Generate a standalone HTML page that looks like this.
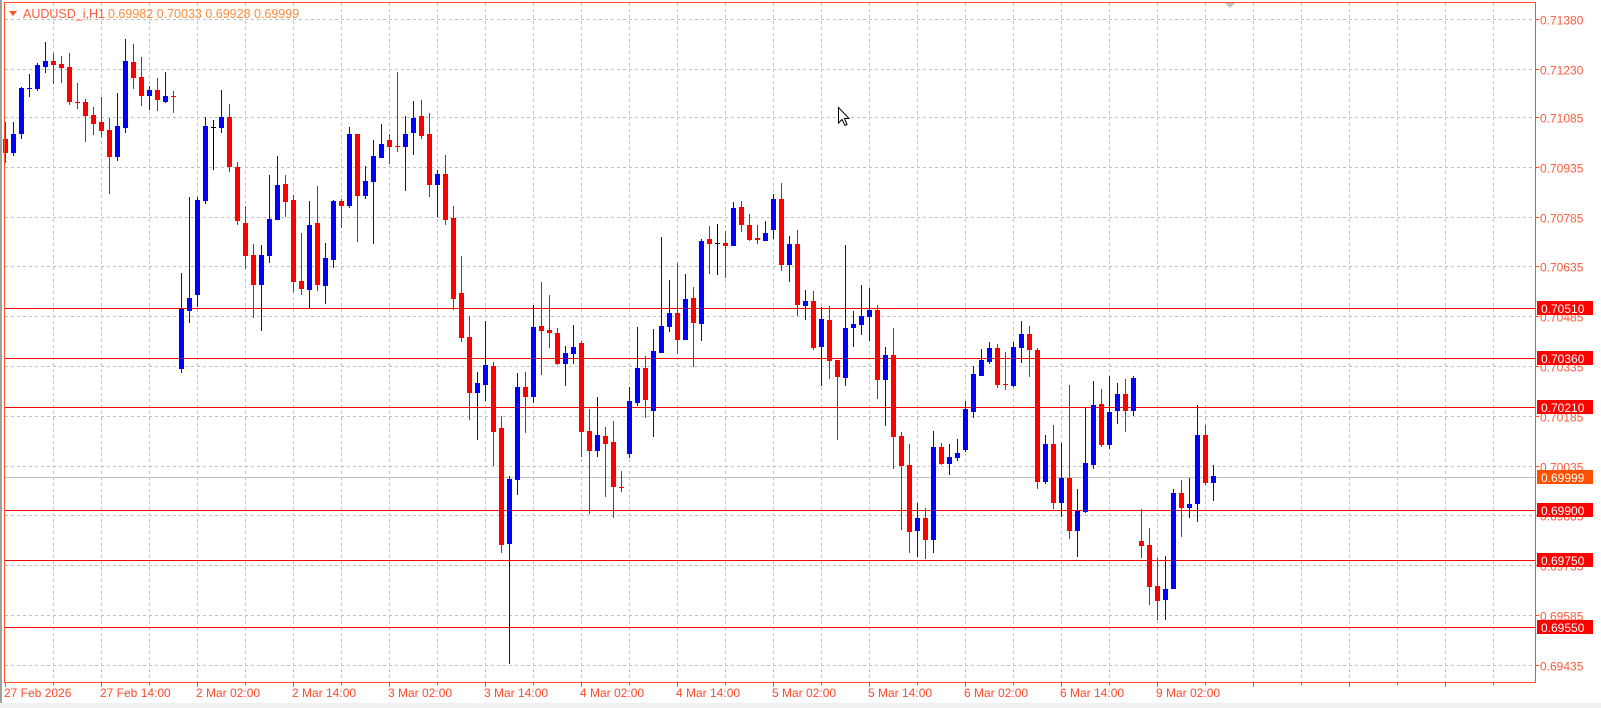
<!DOCTYPE html>
<html><head><meta charset="utf-8">
<style>
html,body{margin:0;padding:0;background:#fff;}
body{width:1601px;height:708px;overflow:hidden;}
svg{display:block;}
text{font-family:"Liberation Sans",sans-serif;}
</style></head>
<body>
<svg id="s" width="1601" height="708" viewBox="0 0 1601 708" xmlns="http://www.w3.org/2000/svg">
<rect x="0" y="0" width="1601" height="708" fill="#fff"/>
<rect x="0" y="0" width="2" height="708" fill="#a0a0a0"/>
<rect x="0" y="703" width="1601" height="5" fill="#f0f0f0"/>
<g id="grid" stroke="#c0c0c0" stroke-width="1" stroke-dasharray="3,3"></g>
<g id="lines"></g>
<g id="candles"></g>
<rect x="4.5" y="2.5" width="1531" height="680" fill="none" stroke="#ff5020" stroke-width="1"/>
<polygon points="1225,3 1235,3 1230,8" fill="#c0c0c0"/>
<polygon points="9,11 17,11 13,16" fill="#ff5020"/>
<text x="23" y="18" font-size="12.5" fill="#ff5a3c">AUDUSD_i,H1</text>
<text x="108" y="18" font-size="12.5" fill="#ff8c3a">0.69982 0.70033 0.69928 0.69999</text>
<g id="plabels" font-size="12" fill="#ff5a3c"></g>
<g id="boxes" font-size="12"></g>
<g id="tlabels" font-size="12" fill="#ff4a2a"></g>
<path d="M838.5,107.5 L838.5,123 L842,119.5 L845,125.5 L847,124.5 L844.5,118.5 L849,118.5 Z" fill="#fff" stroke="#000" stroke-width="1"/>
</svg>
<script>
var NS="http://www.w3.org/2000/svg";
function el(p,t,a,txt){var e=document.createElementNS(NS,t);for(var k in a)e.setAttribute(k,a[k]);if(txt!=null)e.textContent=txt;document.getElementById(p).appendChild(e);return e;}
for(var k=1;k<=31;k++){var x=5.5+48*k;el("grid","line",{x1:x,y1:3,x2:x,y2:682});}
var plab=["0.71380","0.71230","0.71085","0.70935","0.70785","0.70635","0.70485","0.70335","0.70185","0.70035","0.69885","0.69735","0.69585","0.69435"];
function py(p){return 19+(0.71380-p)*33200;}
for(var i=0;i<plab.length;i++){var y=Math.round(py(parseFloat(plab[i])))+0.5;
 if(y<682)el("grid","line",{x1:5,y1:y,x2:1535,y2:y});
 el("lines","line",{x1:1535,y1:y,x2:1539,y2:y,stroke:"#ff5020"});
 el("plabels","text",{x:1540,y:y+5},plab[i]);}
var gy=Math.round(py(0.69999))+0.5;
el("lines","line",{x1:5,y1:gy,x2:1535,y2:gy,stroke:"#c0c0c0"});
var reds=["0.70510","0.70360","0.70210","0.69900","0.69750","0.69550"];
for(var i=0;i<reds.length;i++){var y=Math.round(py(parseFloat(reds[i])))+0.5;
 el("lines","line",{x1:5,y1:y,x2:1535,y2:y,stroke:"#ff0000"});
 el("boxes","rect",{x:1537,y:y-7.5,width:56,height:14,fill:"#ff0000"});
 el("boxes","text",{x:1541,y:y+4.5,fill:"#fff"},reds[i]);}
el("boxes","rect",{x:1537,y:gy-7.5,width:56,height:14,fill:"#ff5000"});
el("boxes","text",{x:1541,y:gy+4.5,fill:"#fff"},"0.69999");
var tl=["27 Feb 2026","27 Feb 14:00","2 Mar 02:00","2 Mar 14:00","3 Mar 02:00","3 Mar 14:00","4 Mar 02:00","4 Mar 14:00","5 Mar 02:00","5 Mar 14:00","6 Mar 02:00","6 Mar 14:00","9 Mar 02:00"];
for(var k=0;k<=31;k++){var x=5.5+48*k;el("lines","line",{x1:x,y1:682,x2:x,y2:(k%2==0?687:685),stroke:"#ff5020"});}
for(var i=0;i<tl.length;i++){el("tlabels","text",{x:4+96*i,y:697},tl[i]);}
var D=[
[0,'r',139,153,122,163],[1,'b',134,153,122,156],[2,'b',88,134,87,139],[3,'b',88,88,74,97],[4,'b',65,89,63,91],
[5,'b',61,67,42,73],[6,'r',61,65,53,84],[7,'r',64,68,56,83],[8,'r',67,102,53,105],[9,'r',102,102,83,109],
[10,'r',102,116,99,142],[11,'r',115,124,107,135],[12,'r',122,131,97,137],[13,'r',130,157,118,194],[14,'b',126,157,93,161],
[15,'b',61,128,39,133],[16,'r',62,78,44,89],[17,'r',77,96,57,106],[18,'b',90,96,86,110],[19,'r',90,100,78,111],
[20,'b',96,102,72,103],[21,'r',96,96,91,113],[22,'b',309,369,273,373],[23,'b',298,311,197,323],[24,'b',200,295,197,307],
[25,'b',126,201,117,204],[26,'k',127,127,120,170],[27,'b',117,128,90,133],[28,'r',117,167,104,172],[29,'r',167,221,162,225],
[30,'r',223,256,206,269],[31,'r',255,285,244,318],[32,'b',255,285,245,331],[33,'b',219,256,175,263],[34,'b',185,220,156,220],
[35,'r',184,202,175,217],[36,'r',200,282,195,292],[37,'r',281,289,233,295],[38,'b',225,290,201,308],[39,'r',223,285,186,291],
[40,'b',258,286,243,304],[41,'b',201,260,200,268],[42,'r',201,206,199,228],[43,'b',134,206,127,208],[44,'r',134,196,134,242],
[45,'b',181,196,166,199],[46,'b',156,182,140,244],[47,'b',144,158,124,158],[48,'r',140,147,134,164],[49,'r',146,146,72,152],
[50,'b',134,147,116,191],[51,'b',118,133,101,155],[52,'r',116,136,100,139],[53,'r',134,185,113,197],[54,'b',174,185,170,217],
[55,'r',174,220,155,225],[56,'r',218,299,206,310],[57,'r',293,338,256,342],[58,'r',337,393,316,420],[59,'b',383,393,372,440],
[60,'b',365,385,321,401],[61,'r',366,432,362,466],[62,'r',428,545,416,553],[63,'b',479,544,476,664],[64,'b',387,480,373,495],
[65,'r',387,397,372,433],[66,'b',327,397,305,403],[67,'r',326,331,282,375],[68,'r',330,333,295,348],[69,'r',333,364,328,365],
[70,'b',353,364,346,386],[71,'b',347,354,325,364],[72,'r',343,432,341,457],[73,'r',431,451,409,514],[74,'b',435,451,397,457],
[75,'r',436,444,427,497],[76,'r',442,487,421,518],[77,'r',487,487,471,492],[78,'b',401,454,387,458],[79,'b',368,403,327,406],
[80,'r',368,400,356,418],[81,'b',351,411,329,437],[82,'b',326,353,237,353],[83,'b',313,327,280,332],[84,'r',313,340,263,354],
[85,'b',299,340,274,340],[86,'r',298,323,287,367],[87,'b',241,324,239,341],[88,'r',239,244,226,274],[89,'k',243,243,224,275],
[90,'r',243,246,231,278],[91,'b',208,246,202,246],[92,'r',207,225,201,232],[93,'r',225,240,214,241],[94,'r',238,240,225,244],
[95,'b',233,241,221,241],[96,'b',199,230,194,239],[97,'r',199,265,183,271],[98,'b',244,265,236,282],[99,'r',244,305,230,316],
[100,'b',301,306,290,320],[101,'r',301,348,291,350],[102,'b',319,347,307,386],[103,'r',320,361,306,379],[104,'r',360,377,360,440],
[105,'b',328,378,245,386],[106,'b',324,328,311,347],[107,'b',316,325,285,335],[108,'b',310,317,288,341],[109,'r',310,380,305,399],
[110,'b',355,380,347,426],[111,'r',355,437,328,469],[112,'r',436,466,432,530],[113,'r',465,532,444,553],[114,'b',518,531,503,557],
[115,'r',518,540,508,559],[116,'b',447,540,431,553],[117,'r',447,464,443,465],[118,'b',457,464,444,475],[119,'b',453,458,439,461],
[120,'b',409,450,401,452],[121,'b',374,412,366,418],[122,'b',360,376,349,376],[123,'b',348,362,342,364],[124,'r',348,385,344,388],
[125,'r',384,384,352,390],[126,'b',347,386,342,387],[127,'b',334,348,321,363],[128,'r',334,350,326,377],[129,'r',350,482,348,489],
[130,'b',444,482,435,484],[131,'r',444,503,425,509],[132,'b',478,503,443,517],[133,'r',478,531,385,539],[134,'b',511,531,489,557],
[135,'b',463,512,407,513],[136,'b',405,465,381,469],[137,'r',404,445,389,447],[138,'b',412,445,376,449],[139,'b',394,411,383,424],
[140,'r',394,411,379,432],[141,'b',378,411,376,416],[142,'r',541,546,509,558],[143,'r',545,587,528,605],[144,'r',586,601,558,620],
[145,'b',589,600,556,620],[146,'b',493,589,489,589],[147,'r',493,508,480,537],[148,'b',504,508,478,518],[149,'b',435,504,405,522],
[150,'r',435,483,425,485],[151,'b',476,483,465,501]];
var col={b:"#0000ff",r:"#ff0000",k:"#000000"};
for(var j=0;j<D.length;j++){var d=D[j];var cx=Math.round(5.3+8*d[0]);var c=col[d[1]];
 el("candles","rect",{x:cx,y:d[4],width:1,height:Math.max(1,d[5]-d[4]),fill:c});
 if(d[3]-d[2]<2){el("candles","rect",{x:cx-2,y:d[2],width:5,height:1,fill:c});}
 else{el("candles","rect",{x:cx-2,y:d[2],width:5,height:d[3]-d[2],fill:c});}}
</script>
</body></html>
